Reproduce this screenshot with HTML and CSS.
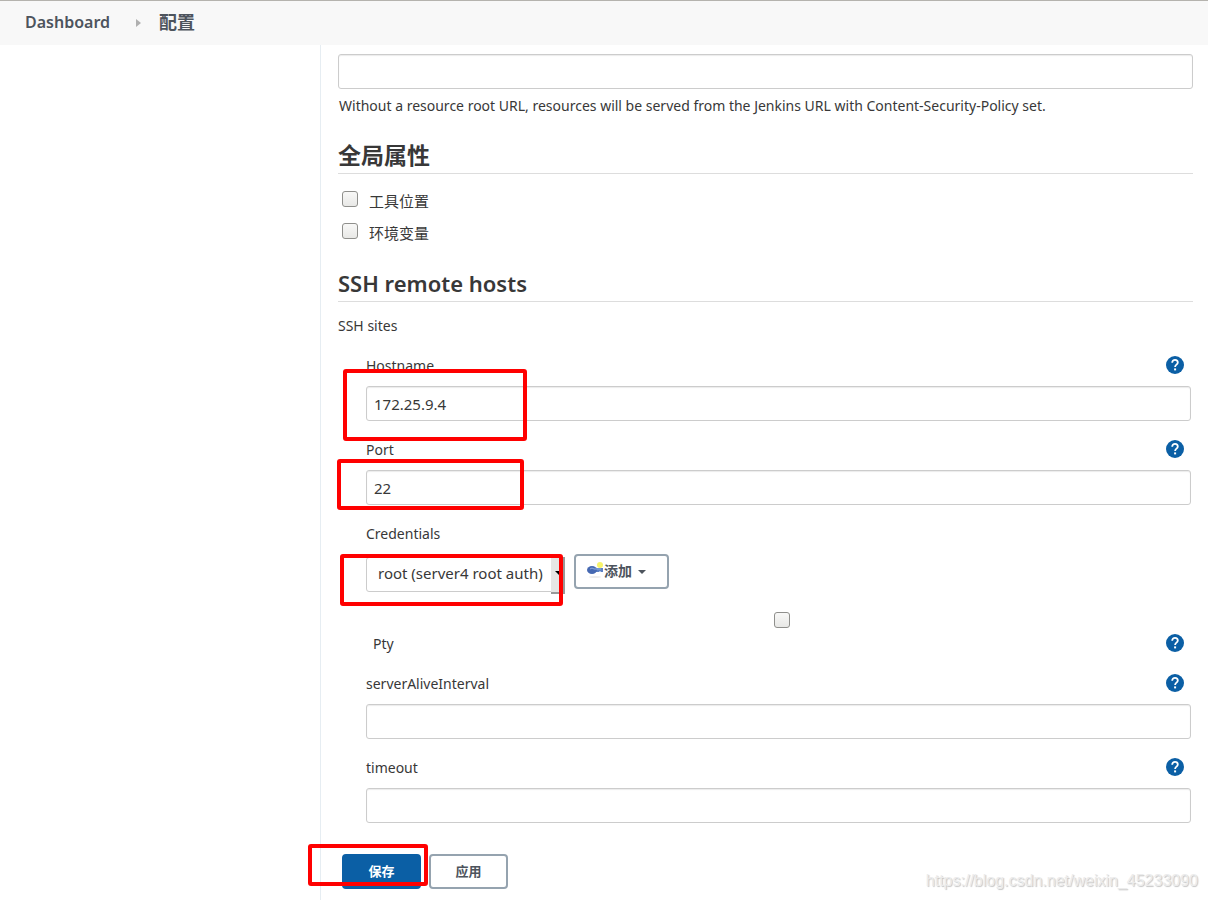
FILE: index.html
```
<!DOCTYPE html>
<html lang="zh-CN">
<head>
    <meta charset="UTF-8">
    <meta name="viewport" content="width=device-width, initial-scale=1.0">
    <title>配置 [Jenkins]</title>
    <link rel="stylesheet" href="styles.css">
</head>
<body>

<!-- Help icon, shared by every field -->
<svg class="sprite" width="0" height="0" aria-hidden="true">
    <symbol id="icon-help" viewBox="0 0 18 18">
        <circle cx="9" cy="9" r="9" fill="#0b5fa5"/>
        <path d="M6.2 6.8C6.2 4.9 7.4 3.8 9 3.8s2.8 1.1 2.8 2.7c0 2-2.7 2.3-2.7 4.4" fill="none" stroke="#fff" stroke-width="1.8"/>
        <rect x="8.1" y="12.4" width="2" height="2" fill="#fff"/>
    </symbol>
</svg>

<nav class="breadcrumbs">
    <a href="/">Dashboard</a>
    <svg class="crumb-arrow" width="5" height="8" viewBox="0 0 5 8" aria-hidden="true"><path d="M0 0l5 4-5 4z" fill="#b0b0b0"/></svg>
    <a href="/configure" class="crumb-cjk">配置</a>
</nav>

<div class="page-body">
    <aside class="side-panel"></aside>

    <main class="main-panel">
        <form onsubmit="return false">
            <input type="text" class="form-input" id="resourceRoot" aria-label="Resource Root URL">
            <p class="description">Without a resource root URL, resources will be served from the Jenkins URL with Content-Security-Policy set.</p>

            <h2 class="title-cjk">全局属性</h2>
            <div class="check-group">
                <div class="check-row">
                    <input type="checkbox" id="toolLocations">
                    <label for="toolLocations">工具位置</label>
                </div>
                <div class="check-row">
                    <input type="checkbox" id="envVars">
                    <label for="envVars">环境变量</label>
                </div>
            </div>

            <h2>SSH remote hosts</h2>
            <div class="section-label">SSH sites</div>

            <div class="site">
                <div class="field">
                    <div class="field-head">
                        <label for="hostname">Hostname</label>
                        <button type="button" class="help-btn" aria-label="Help for Hostname"><svg width="18" height="18"><use href="#icon-help"/></svg></button>
                    </div>
                    <input type="text" class="form-input" id="hostname" value="172.25.9.4">
                    <span class="mark mark-hostname"></span>
                </div>

                <div class="field">
                    <div class="field-head">
                        <label for="port">Port</label>
                        <button type="button" class="help-btn" aria-label="Help for Port"><svg width="18" height="18"><use href="#icon-help"/></svg></button>
                    </div>
                    <input type="text" class="form-input" id="port" value="22">
                    <span class="mark mark-port"></span>
                </div>

                <div class="field">
                    <div class="field-head">
                        <label for="credentials">Credentials</label>
                    </div>
                    <div class="credentials">
                        <div class="select-wrap">
                            <select id="credentials">
                                <option>root (server4 root auth)</option>
                            </select>
                        </div>
                        <button type="button" class="btn btn-add">
                            <svg width="17" height="16" viewBox="0 0 17 16" aria-hidden="true">
                                <ellipse cx="8" cy="15" rx="6" ry="1" fill="#ececec"/>
                                <circle cx="13" cy="3" r="3" fill="#f8f46a"/>
                                <path d="M7 6h9v4h-2l-1-1-1 1H7z" fill="#5b80c4"/>
                                <ellipse cx="5" cy="8" rx="5" ry="4" fill="#4669b2"/>
                                <path d="M3 7q2-2 4 0h7" fill="none" stroke="#8eabdd"/>
                            </svg>
                            <span>添加</span>
                            <svg class="caret" width="8" height="4" viewBox="0 0 8 4" aria-hidden="true"><path d="M0 0h8L4 4z" fill="#4d545d"/></svg>
                        </button>
                    </div>
                    <span class="mark mark-credentials"></span>
                </div>

                <div class="field field-pty">
                    <input type="checkbox" id="pty">
                    <div class="field-head">
                        <label for="pty">Pty</label>
                        <button type="button" class="help-btn" aria-label="Help for Pty"><svg width="18" height="18"><use href="#icon-help"/></svg></button>
                    </div>
                </div>

                <div class="field">
                    <div class="field-head">
                        <label for="interval">serverAliveInterval</label>
                        <button type="button" class="help-btn" aria-label="Help for serverAliveInterval"><svg width="18" height="18"><use href="#icon-help"/></svg></button>
                    </div>
                    <input type="text" class="form-input" id="interval">
                </div>

                <div class="field">
                    <div class="field-head">
                        <label for="timeout">timeout</label>
                        <button type="button" class="help-btn" aria-label="Help for timeout"><svg width="18" height="18"><use href="#icon-help"/></svg></button>
                    </div>
                    <input type="text" class="form-input" id="timeout">
                </div>
            </div>

            <div class="bottom-bar">
                <button type="submit" class="btn btn-primary">保存</button>
                <button type="button" class="btn">应用</button>
                <span class="mark mark-save"></span>
            </div>
        </form>
    </main>
</div>

<div class="watermark">https://blog.csdn.net/weixin_45233090</div>

</body>
</html>
```
FILE: styles.css
```
/* General styles */
* {
    box-sizing: border-box;
}

body {
    margin: 0;
    min-height: 100vh;
    display: flex;
    flex-direction: column;
    position: relative;
    background-color: #fff;
    color: #383838;
    font-family: "Noto Sans", "Noto Sans CJK SC", sans-serif;
    font-size: 14px;
    line-height: 20px;
}

input, select, button {
    font-family: inherit;
    font-size: inherit;
    color: inherit;
}

.sprite {
    position: absolute;
}

/* Breadcrumbs */
.breadcrumbs {
    display: flex;
    align-items: center;
    height: 45px;
    padding: 0 25px 2px;
    border-top: 1px solid #b5b3ae;
    background-color: #f8f8f8;
    font-size: 16px;
    font-weight: 600;
}

.breadcrumbs a {
    color: #4d545d;
    text-decoration: none;
}

.breadcrumbs .crumb-cjk {
    font-size: 18px;
    font-weight: 700;
}

.crumb-arrow {
    margin: 2px 18px 0 26px;
}

/* Layout */
.page-body {
    flex: 1;
    display: grid;
    grid-template-columns: 320px 1fr;
}

.main-panel {
    padding: 9px 15px 11px 17px;
    border-left: 1px solid #e6edf2;
}

h2 {
    margin: 0 0 14px;
    height: 34px;
    border-bottom: 1px solid #ddd;
    font-size: 22px;
    font-weight: 600;
    line-height: 31px;
}

.title-cjk {
    font-size: 23px;
}

.description {
    margin: 7px 0 24px 1px;
}

/* Form controls */
.form-input {
    display: block;
    width: 100%;
    height: 35px;
    padding: 0 7px;
    border: 1px solid #ccc;
    border-radius: 3px;
    background-color: #fff;
    box-shadow: inset 0 1px 1px rgba(0, 0, 0, 0.08);
    font-size: 15px;
}

input[type="checkbox"] {
    appearance: none;
    width: 16px;
    height: 16px;
    margin: 0;
    border: 1px solid #8f8f8c;
    border-radius: 3px;
    background: linear-gradient(#f8f8f7, #e8e8e6);
}

.check-group {
    padding-top: 2px;
}

.check-row {
    display: flex;
    align-items: flex-start;
    gap: 11px;
    height: 32px;
    padding: 1px 4px;
    font-size: 15px;
}

.check-group + h2 {
    margin-top: 14px;
}

.section-label {
    margin-bottom: 20px;
}

.site {
    padding: 0 2px 0 28px;
}

.field {
    position: relative;
    margin-bottom: 19px;
}

.field-head {
    display: flex;
    justify-content: space-between;
    height: 20px;
    margin-bottom: 10px;
    padding-right: 7px;
}

.help-btn {
    display: block;
    width: 18px;
    height: 18px;
    padding: 0;
    border: none;
    background: none;
    cursor: pointer;
}

.help-btn svg {
    display: block;
}

.field-pty {
    margin-bottom: 20px;
    padding-left: 7px;
}

.field-pty input[type="checkbox"] {
    display: block;
    margin: 0 auto 6px;
}

/* Credentials */
.credentials {
    display: flex;
    align-items: flex-start;
    gap: 9px;
    height: 39px;
}

.select-wrap {
    position: relative;
    width: 199px;
    margin-top: 3px;
}

.select-wrap select {
    display: block;
    appearance: none;
    width: 100%;
    height: 35px;
    padding: 0 12px 3px 11px;
    border: 1px solid #ccc;
    border-radius: 3px;
    background-color: #fff;
    font-size: 15px;
}

.select-wrap::before {
    content: "";
    position: absolute;
    top: 0;
    right: 0;
    width: 12px;
    height: 35px;
    border-right: 2px solid #999;
    border-bottom: 2px solid #999;
    background-color: #e6e6e4;
    pointer-events: none;
}

.select-wrap::after {
    content: "";
    position: absolute;
    top: 14px;
    right: 2px;
    border: 4px solid transparent;
    border-top-color: #000;
    border-bottom: 0;
    pointer-events: none;
}

/* Buttons */
.btn {
    width: 79px;
    height: 35px;
    padding: 0 0 2px;
    border: 2px solid #95a3af;
    border-radius: 4px;
    background-color: #fff;
    color: #4d545d;
    font-size: 13px;
    font-weight: 700;
    cursor: pointer;
}

.btn-primary {
    border-color: #0b5fa5;
    background-color: #0b5fa5;
    color: #fff;
}

.btn-add {
    display: flex;
    align-items: center;
    width: 95px;
    padding: 0 0 3px 11px;
    font-size: 14px;
}

.btn-add .caret {
    margin: 3px 0 0 6px;
}

.bottom-bar {
    position: relative;
    display: flex;
    gap: 8px;
    margin-top: 31px;
    padding-left: 4px;
}

/* Red highlight frames */
.mark {
    position: absolute;
    border: 4px solid #f00;
    border-radius: 3px;
    pointer-events: none;
}

.mark-hostname {
    top: 13px;
    left: -23px;
    width: 184px;
    height: 72px;
}

.mark-port {
    top: 19px;
    left: -29px;
    width: 187px;
    height: 51px;
}

.mark-credentials {
    top: 30px;
    left: -26px;
    width: 223px;
    height: 52px;
}

.mark-save {
    top: -10px;
    left: -34px;
    width: 120px;
    height: 42px;
    margin-left: 4px;
}

.watermark {
    position: absolute;
    right: 10px;
    bottom: 9px;
    color: #ececec;
    font-family: "Liberation Sans", sans-serif;
    font-size: 16px;
    text-shadow: 1px 1px 1px #c4c4c4;
}
```
